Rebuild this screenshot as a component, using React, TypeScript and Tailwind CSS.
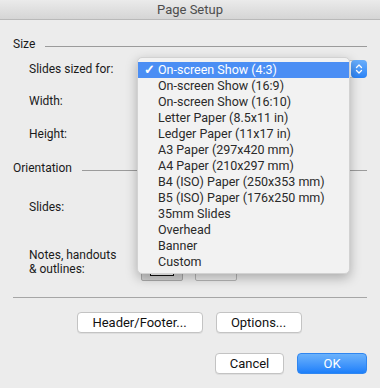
import type { ReactNode } from 'react'

const paperSizes = [
  'On-screen Show (4:3)',
  'On-screen Show (16:9)',
  'On-screen Show (16:10)',
  'Letter Paper (8.5x11 in)',
  'Ledger Paper (11x17 in)',
  'A3 Paper (297x420 mm)',
  'A4 Paper (210x297 mm)',
  'B4 (ISO) Paper (250x353 mm)',
  'B5 (ISO) Paper (176x250 mm)',
  '35mm Slides',
  'Overhead',
  'Banner',
  'Custom',
]

export default function App() {
  return (
    <div className="relative w-[380px] h-[388px] overflow-hidden bg-[#ececec] text-[12px] text-[#1a1a1a] font-['Roboto',sans-serif]">
      {/* タイトルバー */}
      <div className="h-[20px] flex items-center justify-center bg-gradient-to-b from-[#ebebeb] to-[#d5d5d5] border-b border-[#b9b9b9] text-[13px] text-[#4d4d4d]">
        Page Setup
      </div>

      <div className="px-[13px]">
        {/* Size */}
        <SectionHeader title="Size" className="mt-[16px]" />
        <div className="mt-[8px] h-[18px] flex items-center">
          <span className="w-[124px] pl-[16px]">Slides sized for:</span>
          <div className="flex-1 flex items-center h-[18px] rounded-[4px] bg-white border border-[#c5c5c5]">
            <span className="flex-1" />
            <Stepper />
          </div>
        </div>
        <Row className="mt-[15px]">Width:</Row>
        <Row className="mt-[17px]">Height:</Row>

        {/* Orientation */}
        <SectionHeader title="Orientation" className="mt-[18px]" />
        <Row className="mt-[23px]">Slides:</Row>
        <div className="mt-[33px] flex items-start">
          <span className="w-[128px] pl-[16px] leading-[14px]">
            Notes, handouts
            <br />& outlines:
          </span>
          <div className="-mt-[1px] flex gap-[12px]">
            <div className="w-[42px] h-[34px] rounded-[2px] border border-[#a9a9a9] bg-[#d3d3d3] flex justify-center items-end pb-[4px]">
              <div className="w-[24px] h-[22px] border-[1.5px] border-[#111] bg-white" />
            </div>
            <div className="w-[42px] h-[34px] rounded-[2px] border border-[#b5b5b5] bg-[#ececec]" />
          </div>
        </div>

        <div className="mt-[16px] h-px bg-[#a6a6a6]" />

        <div className="mt-[14px] flex justify-center gap-[13px] pr-[2px]">
          <Button className="w-[126px]">Header/Footer...</Button>
          <Button className="w-[86px]">Options...</Button>
        </div>

        <div className="mt-[20px] flex justify-end gap-[13px]">
          <Button className="w-[69px]">Cancel</Button>
          <button className="w-[70px] h-[21px] rounded-[4px] bg-gradient-to-b from-[#6bb2fb] to-[#1b7ffa] border border-[#2f86f0] text-white text-[13px] leading-none">
            OK
          </button>
        </div>
      </div>

      {/* プルダウンメニュー */}
      <div className="absolute left-[137px] top-[57px] w-[213px] pt-[4px] pb-[3px] rounded-[5px] bg-[#f2f2f2] border border-[#d2d2d2] shadow-[0_4px_12px_rgba(0,0,0,0.28)]">
        {paperSizes.map((size, i) => (
          <div
            key={size}
            className={
              i === 0
                ? 'relative h-[16px] pl-[20px] leading-[16px] text-[12.5px] bg-[#4b8ef4] text-white'
                : 'relative h-[16px] pl-[20px] leading-[16px] text-[12.5px] text-[#2a2a2a]'
            }
          >
            {i === 0 && <span className="absolute left-[6px] top-0 font-bold">✓</span>}
            {size}
          </div>
        ))}
      </div>
    </div>
  )
}

function SectionHeader({ title, className }: { title: string; className?: string }) {
  return (
    <div className={`flex items-center h-[16px] gap-[10px] ${className ?? ''}`}>
      <span className="text-[12px]">{title}</span>
      <div className="flex-1 h-px bg-[#9b9b9b] mt-[4px]" />
    </div>
  )
}

function Row({ children, className }: { children: ReactNode; className?: string }) {
  return <div className={`h-[16px] leading-[16px] pl-[16px] ${className ?? ''}`}>{children}</div>
}

function Stepper() {
  return (
    <div className="w-[16px] h-[18px] -mr-px rounded-[4px] bg-gradient-to-b from-[#69aefb] to-[#2a83f6] flex items-center justify-center">
      <svg width="8" height="12" viewBox="0 0 8 12" fill="none" stroke="white" strokeWidth="1.3" strokeLinecap="round" strokeLinejoin="round">
        <path d="M1.5 4.5 L4 2 L6.5 4.5" />
        <path d="M1.5 7.5 L4 10 L6.5 7.5" />
      </svg>
    </div>
  )
}

function Button({ children, className }: { children: ReactNode; className?: string }) {
  return (
    <button
      className={`h-[21px] rounded-[4px] bg-white border border-[#c3c3c3] shadow-[0_1px_0_rgba(0,0,0,0.06)] text-[13px] leading-none text-[#111] ${className ?? ''}`}
    >
      {children}
    </button>
  )
}
